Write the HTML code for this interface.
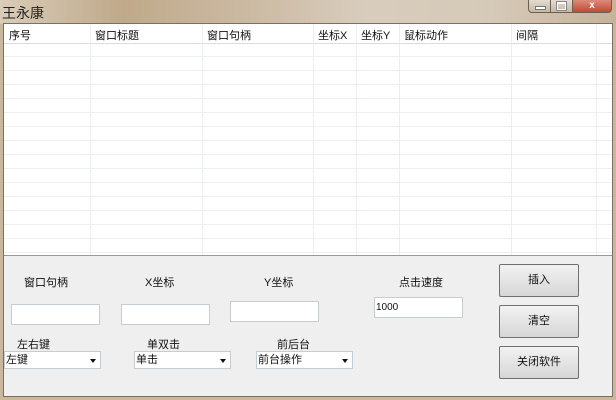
<!DOCTYPE html>
<html><head><meta charset="utf-8"><style>
body{margin:0;width:616px;height:400px;overflow:hidden;font-family:"Liberation Sans","Noto Sans CJK SC",sans-serif;font-size:12px;color:#111;background:#c9b79e;position:relative}
.tb{position:absolute;left:0;top:0;width:616px;height:24px;background:linear-gradient(90deg,#d9ccb8 0%,#bfa98a 20%,#cbb9a2 40%,#d8cdbd 60%,#d5c9b7 80%,#c5b39a 100%)}
.title{position:absolute;left:2px;top:3px;font-size:14px;color:#222}
.client{position:absolute;left:3px;top:23px;width:608px;height:372px;background:#efefef;border:1px solid #7c6f60}
.list{position:absolute;left:0;top:0;width:608px;height:231px;background:#fff;border-bottom:1px solid #999;
background-image:repeating-linear-gradient(180deg,transparent 0 13px,#eceff3 13px 14px);background-position:0 19px}
.hdr{position:absolute;left:0;top:0;width:608px;height:19px;background:#fff;border-bottom:1px solid #d8dce2}
.col{position:absolute;top:0;height:231px;border-left:1px solid #eaedf1}
.h{position:absolute;top:3px;font-size:11px}
.lbl{position:absolute;font-size:11px}
.in{position:absolute;background:#fff;border:1px solid #c6ccd4;height:19px}
.sel{position:absolute;background:#fff;border:1px solid #c6ccd4;height:16px;font-size:11px;line-height:16px;padding-left:1px}
.sel:after{content:"";position:absolute;right:4px;top:7px;border:3px solid transparent;border-top:4px solid #111}
.btn{position:absolute;left:495px;width:78px;height:31px;border:1px solid #707070;border-radius:2px;background:linear-gradient(#f2f2f2,#e4e4e4 50%,#d6d6d6);font-size:11px;text-align:center;line-height:31px}
.wb{position:absolute;top:0;height:12px;border:1px solid #6d5f50;border-top:none}
</style></head><body>
<div class="tb"></div>
<div class="title">王永康</div>
<div class="wb" style="left:528px;width:21px;background:linear-gradient(#e4dcd0,#c4b7a6);border-radius:0 0 0 4px"><div style="position:absolute;left:6px;top:6px;width:9px;height:2px;background:#fff;border:1px solid #777"></div></div>
<div class="wb" style="left:550px;width:21px;background:linear-gradient(#e4dcd0,#c4b7a6)"><div style="position:absolute;left:6px;top:2px;width:7px;height:5px;border:1px solid #fff;border-top:2px solid #fff;outline:1px solid #888"></div></div>
<div class="wb" style="left:572px;width:38px;background:linear-gradient(#dc8a7a,#c04a34);border-radius:0 0 4px 0;color:#fff;font-size:10px;text-align:center;line-height:11px;font-weight:bold">x</div>
<div class="client">
<div class="list">
<div class="hdr"></div>
<div class="col" style="left:86px"></div><div class="col" style="left:198px"></div><div class="col" style="left:309px"></div><div class="col" style="left:352px"></div><div class="col" style="left:395px"></div><div class="col" style="left:507px"></div><div class="col" style="left:592px"></div>
<span class="h" style="left:5px">序号</span><span class="h" style="left:91px">窗口标题</span><span class="h" style="left:203px">窗口句柄</span><span class="h" style="left:314px">坐标X</span><span class="h" style="left:357px">坐标Y</span><span class="h" style="left:400px">鼠标动作</span><span class="h" style="left:512px">间隔</span>
</div>
<span class="lbl" style="left:20px;top:250px">窗口句柄</span>
<span class="lbl" style="left:141px;top:250px">X坐标</span>
<span class="lbl" style="left:260px;top:250px">Y坐标</span>
<span class="lbl" style="left:395px;top:250px">点击速度</span>
<div class="in" style="left:7px;top:280px;width:87px"></div>
<div class="in" style="left:117px;top:280px;width:87px"></div>
<div class="in" style="left:226px;top:277px;width:87px"></div>
<div class="in" style="left:370px;top:273px;width:87px;font-size:10px;line-height:19px;padding-left:1px;width:86px">1000</div>
<span class="lbl" style="left:13px;top:312px">左右键</span>
<span class="lbl" style="left:143px;top:312px">单双击</span>
<span class="lbl" style="left:273px;top:312px">前后台</span>
<div class="sel" style="left:0;top:327px;width:94px">左键</div>
<div class="sel" style="left:130px;top:327px;width:94px">单击</div>
<div class="sel" style="left:252px;top:327px;width:94px">前台操作</div>
<div class="btn" style="top:240px">插入</div>
<div class="btn" style="top:281px">清空</div>
<div class="btn" style="top:322px">关闭软件</div>
</div>
</body></html>
